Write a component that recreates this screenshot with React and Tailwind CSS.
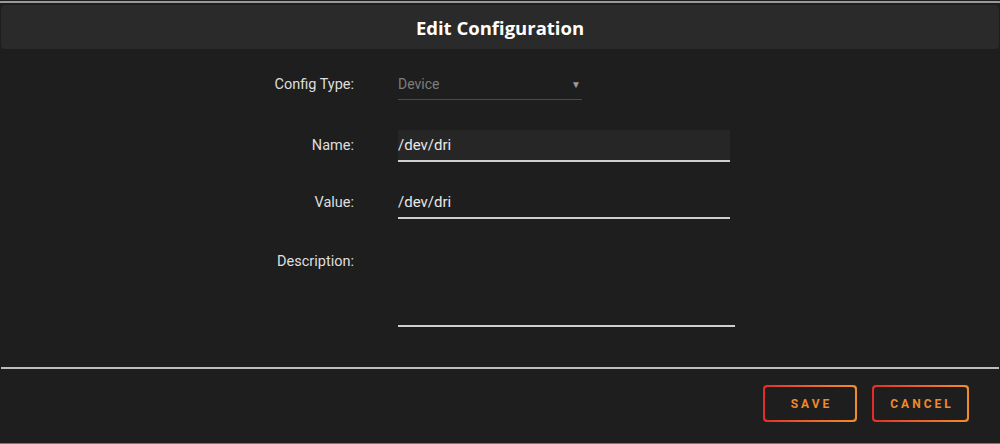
export default function App() {
  const font = { fontFamily: 'Roboto, "Noto Sans", sans-serif' };
  const title = { fontFamily: '"Open Sans", "Noto Sans", sans-serif' };
  return (
    <div className="w-[1000px] h-[444px] bg-[#1e1e1e] flex flex-col overflow-hidden text-[#e6e6e6]" style={font}>
      <div className="h-[2px] mt-[1px] bg-[#9a9a9a]" />
      <div className="mx-[1px] mt-[2px] h-[44px] rounded-[4px] bg-[#2a2a2a] flex items-center justify-center pt-[1px]">
        <h1 className="text-[18.5px] font-bold text-white" style={title}>Edit Configuration</h1>
      </div>

      <div className="flex flex-col mt-[20px]">
        <div className="flex items-center h-[31px]">
          <label className="w-[354px] text-right text-[14.5px] text-[#dedede]">Config Type:</label>
          <div className="ml-[44px] w-[184px] h-full border-b border-[#4a4a4a] flex items-center justify-between pr-[1px]">
            <span className="text-[14px] text-[#7d7d7d]">Device</span>
            <span className="text-[10px] text-[#9a9a9a]">▼</span>
          </div>
        </div>

        <div className="flex items-center h-[32px] mt-[30px]">
          <label className="w-[354px] text-right text-[14.5px] text-[#dedede]">Name:</label>
          <div className="ml-[44px] w-[332px] h-full bg-[#262626] border-b-2 border-[#cfcfcf] flex items-center">
            <span className="text-[15px] text-[#e8e8e8]">/dev/dri</span>
          </div>
        </div>

        <div className="flex items-center h-[32px] mt-[25px]">
          <label className="w-[354px] text-right text-[14.5px] text-[#dedede]">Value:</label>
          <div className="ml-[44px] w-[332px] h-full border-b-2 border-[#cfcfcf] flex items-center">
            <span className="text-[15px] text-[#e8e8e8]">/dev/dri</span>
          </div>
        </div>

        <div className="flex h-[82px] mt-[26px]">
          <label className="w-[354px] text-right text-[14.5px] text-[#dedede] pt-[6px]">Description:</label>
          <div className="ml-[44px] w-[337px] h-full border-b-2 border-[#cfcfcf]" />
        </div>
      </div>

      <div className="h-[2px] mx-[1px] mt-[40px] bg-[#bdbdbd]" />

      <div className="flex justify-end gap-[15px] pr-[31px] mt-[16px]">
        <button className="w-[94px] h-[37px] rounded-[4px] p-[2px] bg-gradient-to-r from-[#e32a2a] to-[#f28c2a]">
          <span className="w-full h-full rounded-[3px] bg-[#1e1e1e] flex items-center justify-center text-[12px] font-bold tracking-[3px] text-[#ef8a2c] pl-[3px]">SAVE</span>
        </button>
        <button className="w-[97px] h-[37px] rounded-[4px] p-[2px] bg-gradient-to-r from-[#e32a2a] to-[#f28c2a]">
          <span className="w-full h-full rounded-[3px] bg-[#1e1e1e] flex items-center justify-center text-[12px] font-bold tracking-[3px] text-[#ef8a2c] pl-[3px]">CANCEL</span>
        </button>
      </div>

      <div className="flex-1" />
      <div className="h-[1px] bg-[#7a7a7a]" />
    </div>
  );
}
